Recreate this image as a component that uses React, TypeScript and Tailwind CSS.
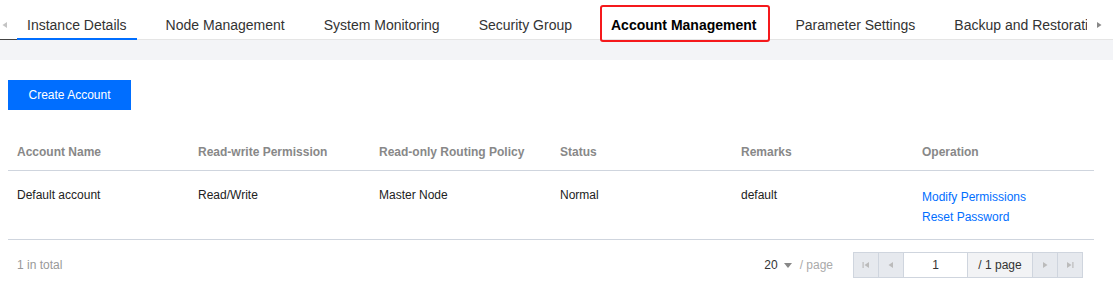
import React from "react";

const tabs = [
  "Instance Details",
  "Node Management",
  "System Monitoring",
  "Security Group",
  "Account Management",
  "Parameter Settings",
  "Backup and Restoration",
];

const cols = [
  "Account Name",
  "Read-write Permission",
  "Read-only Routing Policy",
  "Status",
  "Remarks",
  "Operation",
];

function Tri({ dir, color, bar }: { dir: "l" | "r"; color: string; bar?: boolean }) {
  return (
    <svg width="8" height="8" viewBox="0 0 8 8" className="block">
      {dir === "l" ? (
        <>
          {bar && <rect x="0.5" y="1" width="1.2" height="6" fill={color} />}
          <polygon points={bar ? "7,1 7,7 2.5,4" : "6,1 6,7 1.5,4"} fill={color} />
        </>
      ) : (
        <>
          <polygon points={bar ? "1,1 1,7 5.5,4" : "2,1 2,7 6.5,4"} fill={color} />
          {bar && <rect x="6.3" y="1" width="1.2" height="6" fill={color} />}
        </>
      )}
    </svg>
  );
}

export default function App() {
  return (
    <div
      className="relative w-[1113px] h-[296px] bg-white overflow-hidden"
      style={{ fontFamily: '"Liberation Sans", Arial, sans-serif' }}
    >
      {/* Tab bar */}
      <div className="flex h-[40px] border-b border-[#e5e5e5] overflow-visible">
        <div className="relative w-[17px] h-[40px] shrink-0 border-b border-[#444] flex items-start pt-[21px] pl-[1px]">
          <Tri dir="l" color="#c4c4c4" />
        </div>
        <div className="flex-1 flex overflow-hidden h-[40px]">
          {tabs.map((t, i) => (
            <div
              key={t}
              className={`shrink-0 h-[40px] px-[10px] mr-[19px] pt-[15px] text-[14px] leading-[20px] whitespace-nowrap ${
                i === 0 ? "border-b-2 border-[#006eff]" : ""
              } ${i === 4 ? "font-bold text-black" : "text-[#333]"}`}
            >
              {t}
            </div>
          ))}
        </div>
        <div className="w-[26px] shrink-0 h-[39px] bg-white flex items-start pt-[21px] pl-[8px]">
          <Tri dir="r" color="#888" />
        </div>
      </div>
      <div className="h-[20px] bg-[#f3f4f7]" />

      {/* Content */}
      <div className="pl-[8px] pr-[19px] pt-[20px]">
        <button className="h-[30px] w-[123px] bg-[#006eff] text-white text-[12px] leading-[30px] text-center">
          Create Account
        </button>

        <div className="mt-[20px]">
          <div className="grid grid-cols-6 border-b border-[#cfd5de]">
            {cols.map((c) => (
              <div key={c} className="px-[9px] pt-[12px] pb-[8px] text-[12px] leading-[20px] font-bold text-[#888]">
                {c}
              </div>
            ))}
          </div>
          <div className="grid grid-cols-6 h-[69px] border-b border-[#cfd5de] text-[12px] leading-[20px] text-[#222]">
            <div className="px-[9px] pt-[14px]">Default account</div>
            <div className="px-[9px] pt-[14px]">Read/Write</div>
            <div className="px-[9px] pt-[14px]">Master Node</div>
            <div className="px-[9px] pt-[14px]">Normal</div>
            <div className="px-[9px] pt-[14px]">default</div>
            <div className="px-[9px] pt-[16px] flex flex-col items-start text-[#006eff]">
              <span>Modify Permissions</span>
              <span>Reset Password</span>
            </div>
          </div>

          {/* Footer */}
          <div className="flex items-center h-[50px] pl-[9px] pr-[11px]">
            <div className="text-[12px] text-[#999] flex-1">1 in total</div>
            <div className="flex items-center text-[12px] mr-[20px]">
              <span className="text-[#333]">20</span>
              <svg width="8" height="5" viewBox="0 0 8 5" className="ml-[6px] mr-[8px]">
                <polygon points="0,0 8,0 4,5" fill="#888" />
              </svg>
              <span className="text-[#aaa]">/ page</span>
            </div>
            <div className="flex h-[26px] border border-[#cfd5de] text-[12px]">
              <div className="w-[25px] bg-[#e6e9ee] border-r border-[#cfd5de] flex items-center justify-center">
                <Tri dir="l" color="#bbb" bar />
              </div>
              <div className="w-[25px] bg-[#e6e9ee] border-r border-[#cfd5de] flex items-center justify-center">
                <Tri dir="l" color="#bbb" />
              </div>
              <div className="w-[64px] bg-white border-r border-[#cfd5de] flex items-center justify-center text-[#333]">
                1
              </div>
              <div className="w-[65px] bg-[#f2f3f5] border-r border-[#cfd5de] flex items-center justify-center text-[#333]">
                / 1 page
              </div>
              <div className="w-[25px] bg-[#e6e9ee] border-r border-[#cfd5de] flex items-center justify-center">
                <Tri dir="r" color="#bbb" />
              </div>
              <div className="w-[24px] bg-[#e6e9ee] flex items-center justify-center">
                <Tri dir="r" color="#bbb" bar />
              </div>
            </div>
          </div>
        </div>
      </div>

      {/* Annotation box */}
      <div className="absolute left-[600px] top-[5px] w-[170px] h-[37px] border-2 border-[#f5191c] rounded-[3px] pointer-events-none" />
    </div>
  );
}
